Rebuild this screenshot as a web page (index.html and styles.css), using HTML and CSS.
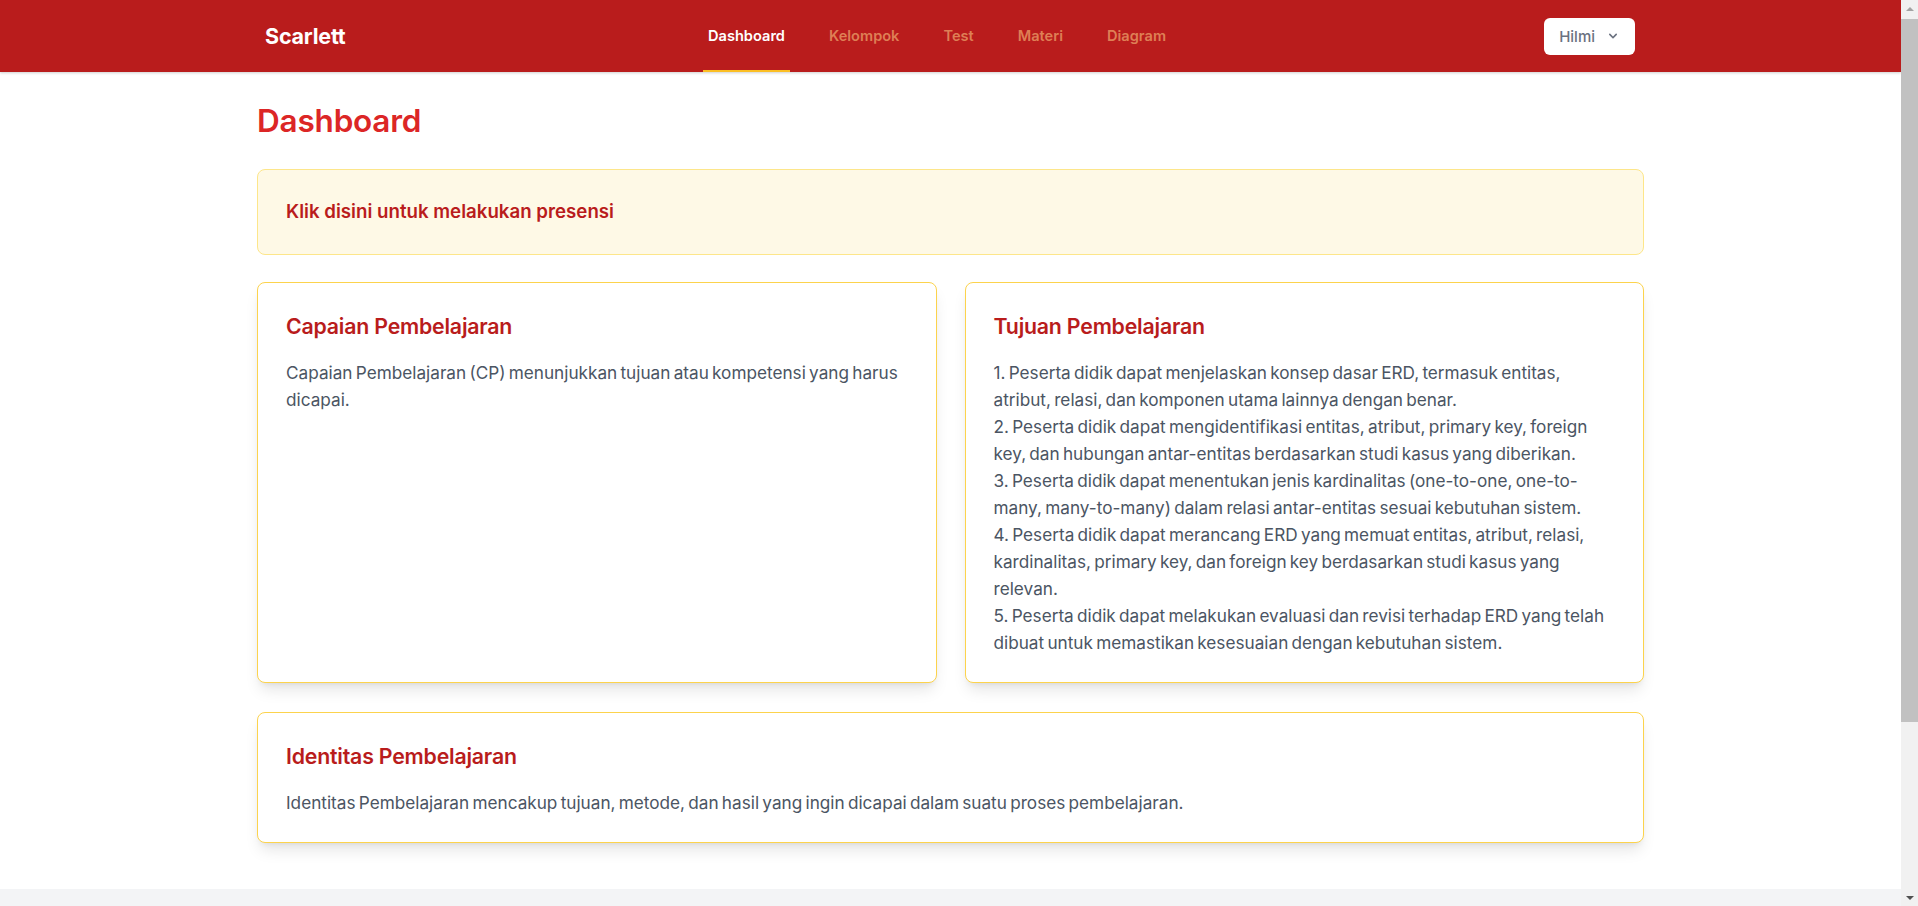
FILE: index.html
```html
<!DOCTYPE html>
<html lang="id">
<head>
<meta charset="utf-8">
<title>Dashboard - Scarlett</title>
<link rel="stylesheet" href="styles.css">
</head>
<body>
<nav class="topbar">
  <div class="topbar-inner">
    <div class="brand">Scarlett</div>
    <ul class="nav-links">
      <li><a class="nav-link active" href="#">Dashboard</a></li>
      <li><a class="nav-link" href="#">Kelompok</a></li>
      <li><a class="nav-link" href="#">Test</a></li>
      <li><a class="nav-link" href="#">Materi</a></li>
      <li><a class="nav-link" href="#">Diagram</a></li>
    </ul>
    <button class="user-btn" type="button">
      <span>Hilmi</span>
      <svg class="chev" viewBox="0 0 20 20" width="16" height="16" aria-hidden="true"><path fill="currentColor" fill-rule="evenodd" d="M5.293 7.293a1 1 0 011.414 0L10 10.586l3.293-3.293a1 1 0 111.414 1.414l-4 4a1 1 0 01-1.414 0l-4-4a1 1 0 010-1.414z"/></svg>
    </button>
  </div>
</nav>

<main class="main">
  <div class="container">
    <h1 class="page-title">Dashboard</h1>

    <a class="presence" href="#">Klik disini untuk melakukan presensi</a>

    <div class="card-row">
      <section class="card">
        <h2 class="card-title">Capaian Pembelajaran</h2>
        <p class="card-text">Capaian Pembelajaran (CP) menunjukkan tujuan atau kompetensi yang harus dicapai.</p>
      </section>
      <section class="card">
        <h2 class="card-title">Tujuan Pembelajaran</h2>
        <p class="card-text">1. Peserta didik dapat menjelaskan konsep dasar ERD, termasuk entitas, atribut, relasi, dan komponen utama lainnya dengan benar.<br>2. Peserta didik dapat mengidentifikasi entitas, atribut, primary key, foreign key, dan hubungan antar-entitas berdasarkan studi kasus yang diberikan.<br>3. Peserta didik dapat menentukan jenis kardinalitas (one-to-one, one-to-many, many-to-many) dalam relasi antar-entitas sesuai kebutuhan sistem.<br>4. Peserta didik dapat merancang ERD yang memuat entitas, atribut, relasi, kardinalitas, primary key, dan foreign key berdasarkan studi kasus yang relevan.<br>5. Peserta didik dapat melakukan evaluasi dan revisi terhadap ERD yang telah dibuat untuk memastikan kesesuaian dengan kebutuhan sistem.</p>
      </section>
    </div>

    <section class="card card-wide">
      <h2 class="card-title">Identitas Pembelajaran</h2>
      <p class="card-text">Identitas Pembelajaran mencakup tujuan, metode, dan hasil yang ingin dicapai dalam suatu proses pembelajaran.</p>
    </section>
  </div>
</main>
<footer class="page-foot"></footer>

<div class="scrollbar" aria-hidden="true">
  <span class="sb-arrow sb-up"></span>
  <span class="sb-thumb"></span>
  <span class="sb-arrow sb-down"></span>
</div>
</body>
</html>
```

FILE: styles.css
```css
* { box-sizing: border-box; }

html {
  margin: 0;
  padding: 0;
  background: #f3f4f6;
}

body {
  margin: 0 17px 0 0;
  padding: 0;
  background: #f3f4f6;
  font-family: Inter, "Liberation Sans", Arial, sans-serif;
  color: #4b5563;
}

/* ---------- top navigation ---------- */
.topbar {
  background: #b91c1c;
  height: 72px;
  box-shadow: 0 1px 3px rgba(0,0,0,0.12), 0 1px 2px rgba(0,0,0,0.08);
  position: relative;
  z-index: 2;
}

.topbar-inner {
  width: 1387px;
  margin: 0 auto;
  padding: 0 9px 0 8px;
  height: 72px;
  display: grid;
  grid-template-columns: 438px auto 1fr;
  align-items: center;
}

.brand {
  color: #ffffff;
  font-weight: 700;
  font-size: 21.5px;
  letter-spacing: -0.2px;
}

.nav-links {
  list-style: none;
  margin: 0;
  padding: 0;
  display: flex;
  gap: 34px;
  height: 72px;
}

.nav-links li { display: flex; }

.nav-link {
  display: flex;
  align-items: center;
  padding: 2px 5px 0;
  height: 72px;
  border-bottom: 2px solid transparent;
  font-size: 14.6px;
  font-weight: 600;
  color: #de7f55;
  text-decoration: none;
}

.nav-link.active {
  color: #ffffff;
  border-bottom-color: #fbbf24;
}

.user-btn {
  justify-self: end;
  display: flex;
  align-items: center;
  height: 37px;
  padding: 0 14px 0 15px;
  background: #ffffff;
  border: none;
  border-radius: 6px;
  font-family: inherit;
  font-size: 15px;
  font-weight: 500;
  color: #6b7280;
}

.chev {
  margin-left: 10px;
  color: #6b7280;
}

/* ---------- page body ---------- */
.main {
  background: #ffffff;
  padding: 29px 0 46px;
}

.container {
  width: 1387px;
  margin: 0 auto;
}

.page-title {
  margin: 0 0 28px;
  font-size: 31.5px;
  line-height: 40px;
  font-weight: 600;
  color: #dc2626;
  letter-spacing: -0.2px;
}

.presence {
  display: block;
  padding: 28px;
  background: #fef9e6;
  border: 1px solid #fde68a;
  border-radius: 8px;
  font-size: 18.7px;
  line-height: 28px;
  font-weight: 600;
  color: #b91c1c;
  text-decoration: none;
}

.card-row {
  margin-top: 27px;
  display: grid;
  grid-template-columns: 1fr 1fr;
  gap: 28px;
}

.card {
  background: #ffffff;
  border: 1px solid #fcd34d;
  border-radius: 8px;
  padding: 29px 28px 26px;
  box-shadow: 0 10px 15px -3px rgba(0,0,0,0.1), 0 4px 6px -4px rgba(0,0,0,0.1);
}

.card-wide {
  margin-top: 29px;
}

.card-title {
  margin: 0 0 19px;
  font-size: 21.3px;
  line-height: 28px;
  font-weight: 600;
  color: #b91c1c;
  letter-spacing: -0.2px;
}

.card-text {
  margin: 0;
  font-size: 17.2px;
  line-height: 27px;
  word-spacing: -1.6px;
  color: #4b5563;
}

.page-foot {
  height: 240px;
}

/* ---------- classic scrollbar drawn over the right edge ---------- */
.scrollbar {
  position: fixed;
  top: 0;
  right: 0;
  width: 17px;
  height: 100vh;
  background: #f1f1f1;
  display: flex;
  flex-direction: column;
  align-items: center;
  z-index: 10;
}

.sb-arrow {
  flex: 0 0 17px;
  width: 17px;
  display: flex;
  align-items: center;
  justify-content: center;
}

.sb-arrow::before {
  content: "";
  width: 0;
  height: 0;
  border-left: 4px solid transparent;
  border-right: 4px solid transparent;
}

.sb-up::before {
  border-bottom: 4px solid #a3a3a3;
}

.sb-down {
  margin-top: auto;
}

.sb-down::before {
  border-top: 4px solid #505050;
}

.sb-thumb {
  width: 17px;
  height: 703px;
  margin-top: 2px;
  background: #c1c1c1;
}
```
